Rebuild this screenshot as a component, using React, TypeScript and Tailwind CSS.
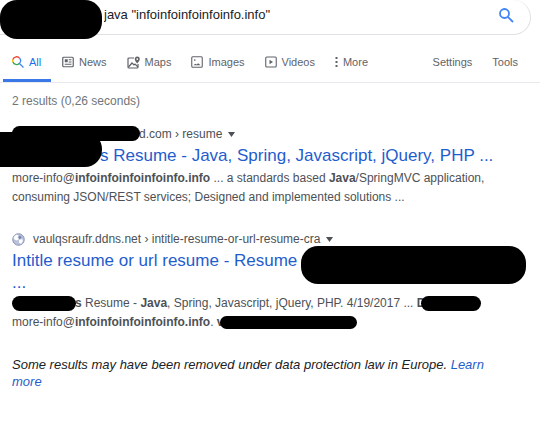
import type { ReactNode } from "react";

const ColorSearchIcon = () => (
  <svg width="12" height="12" viewBox="0 0 24 24" fill="none" strokeWidth="2.6">
    <path d="M2.4 13A8 8 0 0 1 1.8 6.5" stroke="#fbbc04" />
    <path d="M1.8 7A7.600 7.600 0 0 1 15.500 5" stroke="#ea4335" />
    <path d="M2 12A7.600 7.600 0 0 0 14.500 15" stroke="#34a853" />
    <path d="M15.200 4.500A7.600 7.600 0 0 1 14.800 14.800L23 23" stroke="#4285f4" />
  </svg>
);

const NewsIcon = () => (
  <svg width="12" height="12" viewBox="0 0 24 24" fill="none" stroke="currentColor" strokeWidth="2.4">
    <rect x="1.5" y="2.5" width="21" height="19" rx="2" />
    <path d="M6 7h5v5H6z" fill="currentColor" strokeWidth="1" />
    <path d="M13.5 7.5H19M13.5 12H19M5.5 16.5H19" />
  </svg>
);

const MapsIcon = () => (
  <svg width="13" height="13" viewBox="0 0 26 26" fill="none" stroke="currentColor" strokeWidth="2.4">
    <path d="M14 4H4a2 2 0 0 0-2 2v16a2 2 0 0 0 2 2h16a2 2 0 0 0 2-2v-6" />
    <path d="M3 22 10 14l4 4 2-2 6 6" />
    <path
      d="M20.5 1a5 5 0 0 0-5 5c0 3.7 5 9 5 9s5-5.3 5-9a5 5 0 0 0-5-5zm0 3.3a1.8 1.8 0 1 1 0 3.6 1.8 1.8 0 0 1 0-3.6z"
      fill="currentColor"
      fillRule="evenodd"
      stroke="none"
    />
  </svg>
);

const ImagesIcon = () => (
  <svg width="12" height="12" viewBox="0 0 24 24" fill="none" stroke="currentColor" strokeWidth="2.2">
    <rect x="1.5" y="1.5" width="21" height="21" rx="2" />
    <path d="M5 18.5l3.500-3 2.500 1.500 3.500-2.500 4.500 4z" fill="currentColor" stroke="none" />
    <circle cx="7.5" cy="8" r="1.7" fill="currentColor" stroke="none" />
  </svg>
);

const VideosIcon = () => (
  <svg width="12" height="12" viewBox="0 0 24 24" fill="none" stroke="currentColor" strokeWidth="2.2">
    <rect x="1.5" y="2" width="21" height="20" rx="2" />
    <path d="M9 7.5v9l7-4.5z" fill="currentColor" stroke="none" />
  </svg>
);

const MoreIcon = () => (
  <svg width="3" height="10" viewBox="0 0 3 10" fill="currentColor">
    <rect x="0.5" width="2" height="2" />
    <rect x="0.5" y="4" width="2" height="2" />
    <rect x="0.5" y="8" width="2" height="2" />
  </svg>
);

const GlobeIcon = () => (
  <svg width="13" height="13" viewBox="0 0 26 26" className="shrink-0">
    <circle cx="13" cy="13" r="11.5" fill="#b9c2dc" stroke="#8790b3" strokeWidth="2" />
    <path d="M5 6c3-3 6-3 8-1l-2 4 3 3-4 3-5-2-2-3z" fill="#fff" />
    <path d="M14 14l6-2 2 4-4 6-4-3z" fill="#fff" />
    <path d="M15 5l4 3-1 3-3 1-2-3z" fill="#7684b3" />
  </svg>
);

const navItems = [
  { icon: NewsIcon, label: "News" },
  { icon: MapsIcon, label: "Maps" },
  { icon: ImagesIcon, label: "Images" },
  { icon: VideosIcon, label: "Videos" },
];

function ResultMenu() {
  return (
    <button aria-label="Result options" className="ml-1.5">
      <svg width="7" height="5" viewBox="0 0 7 5" fill="#4d5156">
        <path d="M0 0h7L3.5 5z" />
      </svg>
    </button>
  );
}

function Snippet({ children }: { children: ReactNode }) {
  return <p className="text-[12px] leading-[19px] text-[#4d5156]">{children}</p>;
}

export default function App() {
  return (
    <div className="bg-white font-['Liberation_Sans',Arial,sans-serif] text-[#202124]">
      <header>
        <form className="relative mr-[9px] flex h-[35px] items-center rounded-r-full border border-t-0 border-l-0 border-[#dfe1e5] pr-4 pb-1 pl-[104px]">
          <span className="absolute top-0 left-0 h-[39px] w-[102px] rounded-[17px] bg-black" />
          <input
            type="text"
            aria-label="Search"
            defaultValue={'java "infoinfoinfoinfoinfo.info"'}
            className="min-w-0 flex-1 text-[13px] outline-none"
          />
          <button type="button" aria-label="Search" className="text-[#4285f4]">
            <svg width="15" height="15" viewBox="0 0 15 15" fill="none" stroke="currentColor" strokeWidth="1.8">
              <circle cx="5.5" cy="5.5" r="4.5" />
              <path d="M8.8 8.8l5.2 5.2" />
            </svg>
          </button>
        </form>

        <nav className="mt-[10px] flex h-[38px] border-b border-[#e8eaed] text-[11px] text-[#5f6368]">
          <a href="#" className="flex w-12 ml-[3px] items-center gap-[5px] border-b-3 border-[#3b78e7] pl-[9px] text-[#1a73e8]">
            <ColorSearchIcon />
            All
          </a>
          <div className="ml-[11px] flex items-center gap-5 pb-[3px]">
            {navItems.map((item) => (
              <a key={item.label} href="#" className="flex items-center gap-[5px]">
                <item.icon />
                {item.label}
              </a>
            ))}
            <button className="flex items-center gap-[5px]">
              <MoreIcon />
              More
            </button>
          </div>
          <div className="mr-[22px] ml-auto flex items-center gap-5 pb-[3px]">
            <button>Settings</button>
            <button>Tools</button>
          </div>
        </nav>
      </header>

      <main className="pr-8 pb-8 pl-3">
        <p className="pt-[9px] text-[12px] leading-[18px] text-[#70757a]">2 results (0,26 seconds)</p>

        <article className="mt-4">
          <div className="relative flex h-4 items-center pl-[127px] text-[12px] text-[#4d5156]">
            <span className="absolute top-0 left-0 z-10 h-[15px] w-32 rounded-full bg-black" />
            <cite className="not-italic">d.com › resume</cite>
            <ResultMenu />
          </div>
          <h3 className="relative mt-[3px] mb-[2px] pl-[88px] text-[17px] leading-[22px] text-[#1f5dcd]">
            <a href="#">s Resume - Java, Spring, Javascript, jQuery, PHP ...</a>
            <span className="absolute top-[-13px] -left-3 h-[35px] w-[102px] rounded-r-[17px] bg-black" />
          </h3>
          <Snippet>
            more-info@<b>infoinfoinfoinfoinfo.info</b> ... a standards based <b>Java</b>/SpringMVC application,
            <br />
            consuming JSON/REST services; Designed and implemented solutions ...
          </Snippet>
        </article>

        <article className="mt-6">
          <div className="flex h-4 items-center text-[12px] text-[#4d5156]">
            <GlobeIcon />
            <cite className="ml-2 not-italic">vaulqsraufr.ddns.net › intitle-resume-or-url-resume-cra</cite>
            <ResultMenu />
          </div>
          <h3 className="relative mt-[3px] text-[17px] leading-[22px] text-[#1f5dcd]">
            <a href="#">
              Intitle resume or url resume - Resume -
              <br />
              ...
            </a>
            <span className="absolute top-[-4px] left-[289px] h-[38px] w-[225px] rounded-[17px] bg-black" />
          </h3>
          <Snippet>
            <span className="-mr-px inline-block h-[15px] w-16 rounded-full bg-black align-middle" />
            <b>s</b> Resume - <b>Java</b>, Spring, Javascript, jQuery, PHP. 4/19/2017 ... <b>D</b>
            <span className="-ml-1 inline-block h-[15px] w-[60px] rounded-full bg-black align-middle" />
            <br />
            more-info@<b>infoinfoinfoinfoinfo.info</b>. <b>v</b>
            <span className="-ml-1 inline-block h-[13px] w-[137px] rounded-full bg-black align-middle" />
          </Snippet>
        </article>

        <p className="mt-6 text-[13px] leading-[17px] italic">
          Some results may have been removed under data protection law in Europe.{" "}
          <a href="#" className="text-[#1f5dcd]">
            Learn more
          </a>
        </p>
      </main>
    </div>
  );
}
